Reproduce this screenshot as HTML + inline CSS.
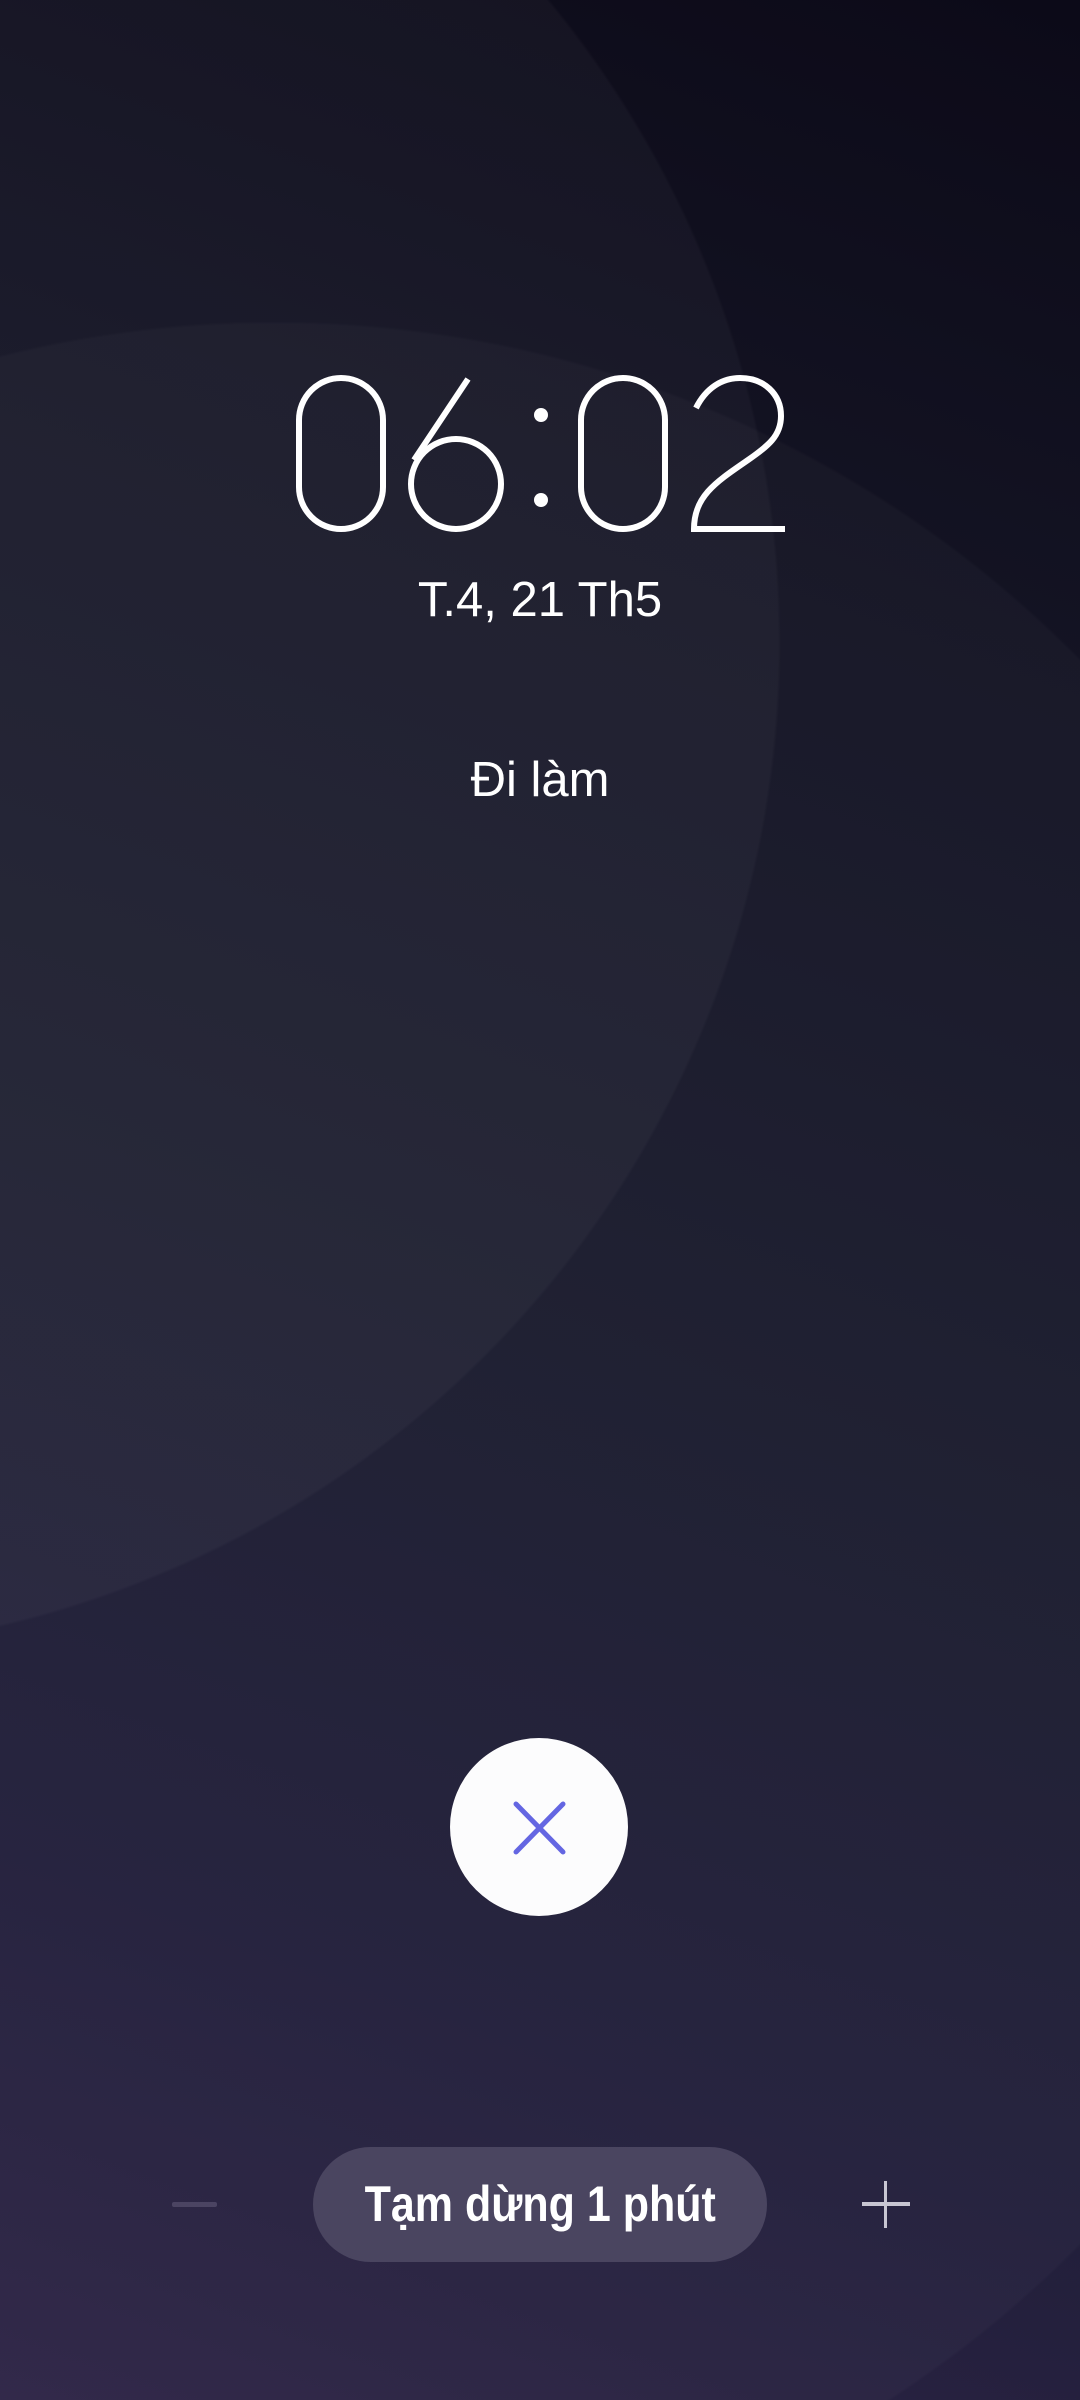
<!DOCTYPE html>
<html><head><meta charset="utf-8">
<style>
html,body{margin:0;padding:0;width:1080px;height:2400px;overflow:hidden;background:#141424;}
#w{position:relative;width:1080px;height:2400px;overflow:hidden;
background:
radial-gradient(circle 1010px at -230px 643px, rgba(255,255,255,0.03) 1008px, rgba(255,255,255,0) 1011px),
radial-gradient(circle 1130px at 275px 1452px, rgba(255,255,255,0.022) 1128px, rgba(255,255,255,0) 1131px),
linear-gradient(200deg,#0c0a18 0%,#141424 25%,#1b1c2e 55%,#221f3b 80%,#2d2446 100%);
font-family:"Liberation Sans",sans-serif;color:#fff;}
.t{position:absolute;left:0;width:1080px;text-align:center;}
</style></head><body><div id="w">

<svg width="1080" height="600" style="position:absolute;left:0;top:0" fill="none" stroke="#fff" stroke-width="6" stroke-linecap="butt">
 <rect x="299" y="378" width="84" height="151" rx="42"/>
 <circle cx="456" cy="484" r="45"/>
 <path d="M468 379 L414 460"/>
 <circle cx="541" cy="415" r="7" fill="#fff" stroke="none"/>
 <circle cx="541" cy="500" r="7" fill="#fff" stroke="none"/>
 <rect x="581" y="378" width="84" height="151" rx="42"/>
 <path d="M696 408 C706 388 722 378 740 378 C764 378 781 394 781 416 C781 436 768 446 748 460 C716 482 694 496 694 529 L785 529"/>
</svg>

<div class="t" style="top:572px;font-size:49px;">T.4, 21 Th5</div>
<div class="t" style="top:752px;font-size:49px;">Đi làm</div>

<div style="position:absolute;left:450px;top:1738px;width:178px;height:178px;border-radius:50%;background:#fcfcfd"></div>
<svg width="1080" height="120" style="position:absolute;left:0;top:1767px" stroke="#6466e2" stroke-width="5" stroke-linecap="round">
 <path d="M516 37 L563 85 M563 37 L516 85"/>
</svg>

<div style="position:absolute;left:172px;top:2202px;width:45px;height:5px;border-radius:2px;background:#4b4462"></div>
<div style="position:absolute;left:313px;top:2147px;width:454px;height:115px;border-radius:58px;background:#4a4560"></div>
<div class="t" style="top:2174px;font-size:50px;font-weight:bold;line-height:60px;"><span style="display:inline-block;transform:scaleX(0.86)">Tạm dừng 1 phút</span></div>
<div style="position:absolute;left:862px;top:2202px;width:48px;height:4px;background:#c8c6d2"></div>
<div style="position:absolute;left:884px;top:2181px;width:3px;height:47px;background:#c8c6d2"></div>
</div></body></html>
